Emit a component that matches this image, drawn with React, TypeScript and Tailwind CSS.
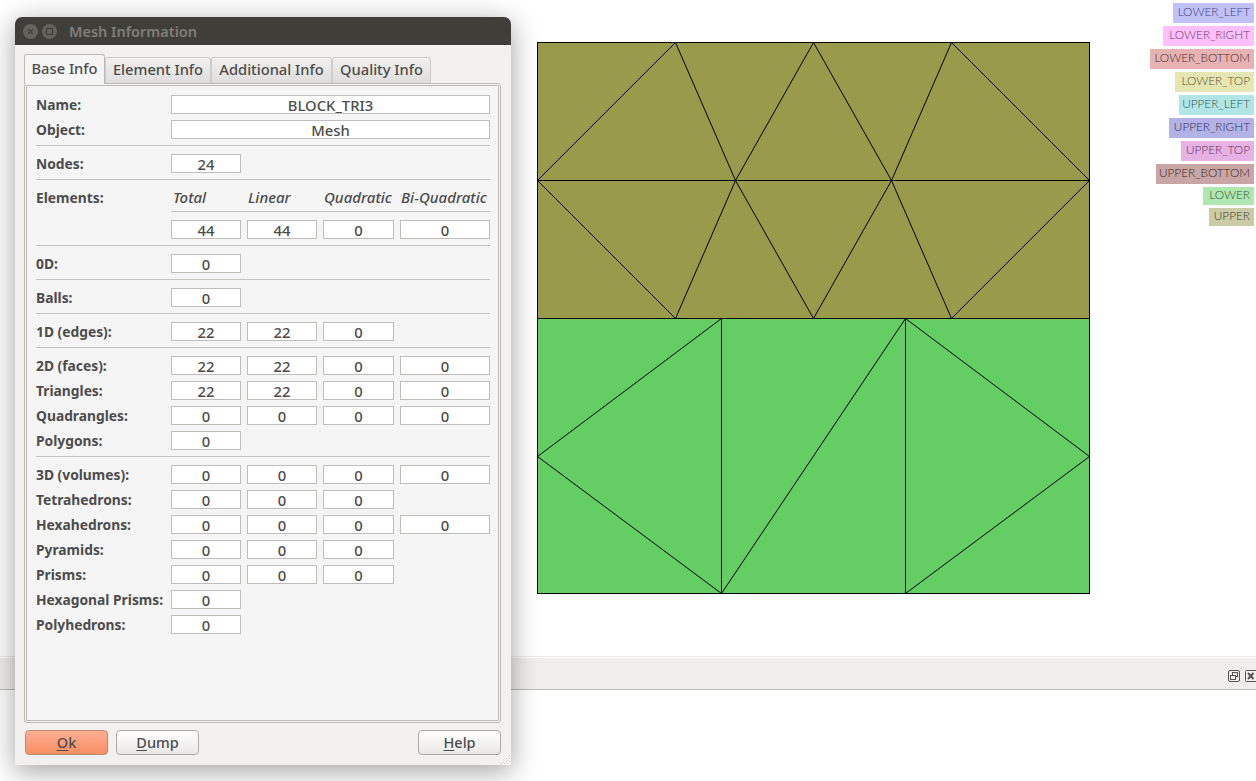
import type { ReactNode } from "react";

const FONT = "font-['Noto_Sans','Open_Sans',sans-serif]";

const groupLabels = [
  { text: "LOWER_LEFT", w: "w-[81px]", h: "h-[20px]", bg: "bg-[#c0c0fc]", fg: "text-[#3f3f70]" },
  { text: "LOWER_RIGHT", w: "w-[91px]", h: "h-[20px]", bg: "bg-[#fdc0fd]", fg: "text-[#6a3a6a]" },
  { text: "LOWER_BOTTOM", w: "w-[104px]", h: "h-[20px]", bg: "bg-[#e6b2b2]", fg: "text-[#4e2a2a]" },
  { text: "LOWER_TOP", w: "w-[79px]", h: "h-[20px]", bg: "bg-[#e6e6b2]", fg: "text-[#55552f]" },
  { text: "UPPER_LEFT", w: "w-[75px]", h: "h-[20px]", bg: "bg-[#b2e6e6]", fg: "text-[#2f5858]" },
  { text: "UPPER_RIGHT", w: "w-[85px]", h: "h-[20px]", bg: "bg-[#b2b2e6]", fg: "text-[#30305e]" },
  { text: "UPPER_TOP", w: "w-[73px]", h: "h-[20px]", bg: "bg-[#e6b2e6]", fg: "text-[#5a305a]" },
  { text: "UPPER_BOTTOM", w: "w-[98px]", h: "h-[20px]", bg: "bg-[#c9a6a6]", fg: "text-[#3c2222]" },
  { text: "LOWER", w: "w-[51px]", h: "h-[18px]", bg: "bg-[#b0e6b0]", fg: "text-[#305a30]" },
  { text: "UPPER", w: "w-[45px]", h: "h-[18px]", bg: "bg-[#cbcba6]", fg: "text-[#3e3e2a]" },
];

const meshLines = [
  [538, 180, 676, 42],
  [676, 42, 736, 180],
  [736, 180, 814, 42],
  [814, 42, 892, 180],
  [892, 180, 952, 42],
  [952, 42, 1090, 180],
  [538, 180, 1090, 180],
  [538, 180, 676, 318],
  [676, 318, 736, 180],
  [736, 180, 814, 318],
  [814, 318, 892, 180],
  [892, 180, 952, 318],
  [952, 318, 1090, 180],
  [538, 318, 1090, 318],
  [722, 318, 722, 593],
  [906, 318, 906, 593],
  [538, 456, 722, 318],
  [538, 456, 722, 593],
  [722, 593, 906, 318],
  [906, 318, 1090, 456],
  [1090, 456, 906, 593],
];

function Field({ value, w = "w-[70px]" }: { value: string; w?: string }) {
  return (
    <div className={`${w} flex h-[19px] items-center justify-center border border-[#bfbdba] bg-white pt-[1px] text-[14.8px] leading-none font-medium text-[#4c4c4c]`}>
      {value}
    </div>
  );
}

function Row({ label, values = [], full }: { label?: string; values?: string[]; full?: string }) {
  const widths = ["w-[70px]", "w-[70px]", "w-[71px]", "w-[90px]"];
  return (
    <div className="mb-[6px] flex h-[19px] items-center">
      <div className="w-[135px] pt-[1px] text-[13.8px] leading-none font-bold whitespace-nowrap text-[#4c4c4c]">{label}</div>
      {full ? (
        <Field value={full} w="w-[319px]" />
      ) : (
        <div className="flex gap-[6px]">
          {values.map((v, i) => (
            <Field key={i} value={v} w={widths[i]} />
          ))}
        </div>
      )}
    </div>
  );
}

function Sep() {
  return <div className="mb-[8px] h-px w-[454px] bg-[#c6c4c1]" />;
}

function Tab({ children, w, active }: { children: ReactNode; w: string; active?: boolean }) {
  if (active) {
    return (
      <div className={`${w} relative z-10 flex h-[30px] items-center justify-center rounded-t-[3px] border border-b-0 border-[#bcbab6] bg-[#f5f5f5] pb-[2px] text-[14.7px] font-medium text-[#4c4c4c]`}>
        {children}
      </div>
    );
  }
  return (
    <div className={`${w} mt-[3px] flex h-[26px] items-center justify-center rounded-t-[3px] border border-b-0 border-[#cfcdc9] bg-gradient-to-b from-[#f1f0ef] to-[#dfdedc] pb-[2px] text-[14.7px] font-medium text-[#4c4c4c]`}>
      {children}
    </div>
  );
}

function Button({ letter, rest, primary, className = "" }: { letter: string; rest: string; primary?: boolean; className?: string }) {
  const look = primary
    ? "border-[#bd8a74] bg-gradient-to-b from-[#ffae92] to-[#f98e63]"
    : "border-[#adaba7] bg-gradient-to-b from-[#ffffff] to-[#e9e8e6]";
  return (
    <div className={`${look} ${className} flex h-[25px] w-[83px] items-center justify-center rounded-[4px] border text-[14.5px] font-medium text-[#4c4c4c]`}>
      <span className="underline underline-offset-2">{letter}</span>
      {rest}
    </div>
  );
}

function MeshDialog() {
  return (
    <div className={`${FONT} absolute top-[17px] left-[15px] flex w-[496px] flex-col rounded-t-[7px] bg-[#f2f1f0] shadow-[0_6px_28px_rgba(0,0,0,0.38)]`}>
      <div className="flex h-[28px] items-center rounded-t-[7px] bg-[#3f3e39] pl-[8px]">
        <svg width="15" height="15" viewBox="0 0 15 15">
          <circle cx="7.5" cy="7.5" r="7.5" fill="#64635e" />
          <path d="M5 5 L10 10 M10 5 L5 10" stroke="#3f3e39" strokeWidth="1.2" />
        </svg>
        <svg width="15" height="15" viewBox="0 0 15 15" className="ml-[4px]">
          <circle cx="7.5" cy="7.5" r="7.5" fill="#64635e" />
          <rect x="4.5" y="4.5" width="6" height="6" fill="none" stroke="#3f3e39" strokeWidth="1.2" />
        </svg>
        <span className="ml-[12px] pt-[2px] text-[14.5px] font-semibold text-[#7f7e78]">Mesh Information</span>
      </div>

      <div className="pt-[9px] pr-[10px] pb-[10px] pl-[9px]">
        <div className="flex h-[29px]">
          <Tab w="w-[81px]" active>Base Info</Tab>
          <Tab w="w-[106px]">Element Info</Tab>
          <Tab w="w-[121px]">Additional Info</Tab>
          <Tab w="w-[99px]">Quality Info</Tab>
        </div>
        <div className="h-[640px] rounded-[3px] border-[3px] border-double border-[#bcbab5] bg-[#f5f5f5] pt-[9px] pl-[9px]">
          <Row label="Name:" full="BLOCK_TRI3" />
          <Row label="Object:" full="Mesh" />
          <Sep />
          <Row label="Nodes:" values={["24"]} />
          <Sep />
          <div className="mb-[4px] flex h-[19px] items-center text-[13.8px] leading-none text-[#4c4c4c]">
            <div className="w-[135px] font-bold">Elements:</div>
            <div className="w-[76px] pb-[1px] pl-[2px] text-[15px] font-medium italic">Total</div>
            <div className="w-[76px] pb-[1px] pl-[1px] text-[15px] font-medium italic">Linear</div>
            <div className="w-[77px] pb-[1px] pl-[1px] text-[15px] font-medium italic">Quadratic</div>
            <div className="pb-[1px] pl-[1px] text-[15px] font-medium whitespace-nowrap italic">Bi-Quadratic</div>
          </div>
          <div className="mb-[8px] ml-[135px] h-px w-[319px] bg-[#c6c4c1]" />
          <Row values={["44", "44", "0", "0"]} />
          <Sep />
          <Row label="0D:" values={["0"]} />
          <Sep />
          <Row label="Balls:" values={["0"]} />
          <Sep />
          <Row label="1D (edges):" values={["22", "22", "0"]} />
          <Sep />
          <Row label="2D (faces):" values={["22", "22", "0", "0"]} />
          <Row label="Triangles:" values={["22", "22", "0", "0"]} />
          <Row label="Quadrangles:" values={["0", "0", "0", "0"]} />
          <Row label="Polygons:" values={["0"]} />
          <Sep />
          <Row label="3D (volumes):" values={["0", "0", "0", "0"]} />
          <Row label="Tetrahedrons:" values={["0", "0", "0"]} />
          <Row label="Hexahedrons:" values={["0", "0", "0", "0"]} />
          <Row label="Pyramids:" values={["0", "0", "0"]} />
          <Row label="Prisms:" values={["0", "0", "0"]} />
          <Row label="Hexagonal Prisms:" values={["0"]} />
          <Row label="Polyhedrons:" values={["0"]} />
        </div>
        <div className="mt-[7px] flex pl-[1px]">
          <Button letter="O" rest="k" primary />
          <Button letter="D" rest="ump" className="ml-[8px]" />
          <Button letter="H" rest="elp" className="ml-auto" />
        </div>
      </div>

      <svg width="11" height="11" viewBox="0 0 11 11" className="absolute right-0 bottom-0 text-[#cfcdca]" fill="currentColor">
        <rect x="9" y="1" width="1" height="1" />
        <rect x="6" y="4" width="1" height="1" />
        <rect x="9" y="4" width="1" height="1" />
        <rect x="3" y="7" width="1" height="1" />
        <rect x="6" y="7" width="1" height="1" />
        <rect x="9" y="7" width="1" height="1" />
        <rect x="1" y="9" width="1" height="1" />
        <rect x="4" y="9" width="1" height="1" />
        <rect x="7" y="9" width="1" height="1" />
      </svg>
    </div>
  );
}

export default function App() {
  return (
    <div className="relative flex h-[781px] w-[1256px] flex-col overflow-hidden bg-white">
      <div className="h-[656px] shrink-0 pt-[42px] pl-[537px]">
        <svg width="553" height="552" viewBox="537 42 553 552" className="block">
          <rect x="537.5" y="42.5" width="552" height="276" fill="#9a9a4c" />
          <rect x="537.5" y="318.5" width="552" height="275" fill="#64ce64" />
          {meshLines.map(([x1, y1, x2, y2], i) => (
            <line
              key={i}
              x1={x1 - 0.5}
              y1={y1 + 0.5}
              x2={x2 - 0.5}
              y2={y2 + 0.5}
              stroke="#000"
              strokeWidth="1"
            />
          ))}
          <rect x="537.5" y="42.5" width="552" height="551" fill="none" stroke="#000" />
        </svg>
      </div>

      <div className="absolute top-[3px] right-[2px] flex flex-col items-end gap-[3px] font-['Lato',sans-serif]">
        {groupLabels.map((l) => (
          <div key={l.text} className={`${l.w} ${l.h} ${l.bg} ${l.fg} flex items-center justify-end pr-[4px] pb-[2px] text-[11.8px] leading-none font-light`}>
            {l.text}
          </div>
        ))}
      </div>

      <div className="h-px bg-[#ececec]" />
      <div className="mt-[1px] flex h-[32px] items-center justify-end gap-[5px] border-b border-[#bfbdb8] bg-[#f0efee] pt-[5px]">
        <svg width="12" height="12" viewBox="0 0 12 12" fill="none" stroke="#555" strokeWidth="1">
          <rect x="0.5" y="0.5" width="11" height="11" rx="1.5" />
          <rect x="4.5" y="2.5" width="5" height="4" />
          <rect x="2.5" y="5.5" width="5" height="4" fill="#f0efee" />
        </svg>
        <svg width="11" height="12" viewBox="0 0 11 12" fill="none" stroke="#555">
          <path d="M11 0.5 H1.5 a1 1 0 0 0 -1 1 V10.5 a1 1 0 0 0 1 1 H11" />
          <path d="M3 3 L8.5 9 M8.5 3 L3 9" strokeWidth="2" />
        </svg>
      </div>

      <MeshDialog />
    </div>
  );
}
